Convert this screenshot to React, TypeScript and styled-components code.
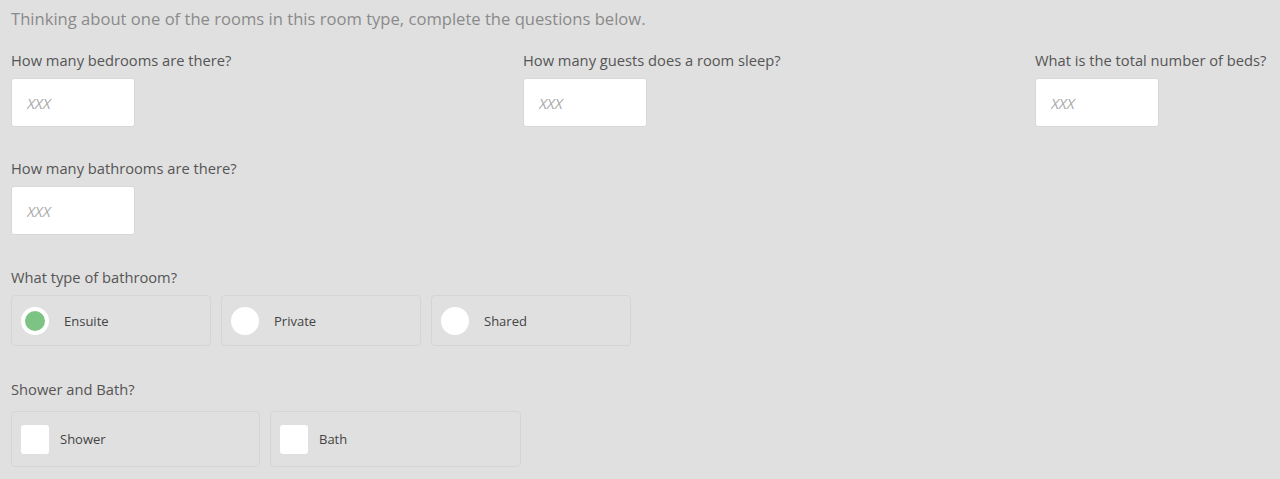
import React from 'react';
import styled, { createGlobalStyle } from 'styled-components';

const GlobalStyle = createGlobalStyle`
  body {
    margin: 0;
    background: #e0e0e0;
    font-family: 'Open Sans', 'Noto Sans', sans-serif;
  }
`;

const Page = styled.div`
  padding: 8px 11px 12px;
  width: 1280px;
  box-sizing: border-box;
`;

const Intro = styled.p`
  margin: 0 0 20px;
  font-size: 16.6px;
  line-height: 22px;
  color: #8a8a8a;
`;

const FieldGrid = styled.div`
  display: grid;
  grid-template-columns: 500px 500px auto;
  column-gap: 12px;
  row-gap: 31px;
  margin-bottom: 32px;
`;

const Field = styled.div`
  display: flex;
  flex-direction: column;
  align-items: flex-start;
`;

const Label = styled.label<{ $gap?: number }>`
  display: block;
  font-size: 14.7px;
  line-height: 20px;
  color: #555;
  white-space: nowrap;
  margin-bottom: ${(p) => p.$gap ?? 8}px;
`;

const NumberInput = styled.input`
  width: 124px;
  height: 49px;
  box-sizing: border-box;
  border: 1px solid #d8d8d8;
  border-radius: 3px;
  background: #fff;
  padding: 0 15px;
  font-family: inherit;
  font-size: 15px;
  font-style: italic;
  color: #555;
  outline: none;

  &::placeholder {
    color: #aaa;
  }
`;

const Section = styled.div<{ $bottom?: number }>`
  margin-bottom: ${(p) => p.$bottom ?? 0}px;
`;

const OptionRow = styled.div`
  display: flex;
  gap: 10px;
`;

const OptionCard = styled.label<{ $w: number; $h: number; $gap: number }>`
  display: flex;
  align-items: center;
  gap: ${(p) => p.$gap}px;
  width: ${(p) => p.$w}px;
  height: ${(p) => p.$h}px;
  box-sizing: border-box;
  padding-left: 9px;
  border: 1px solid #d5d5d5;
  border-radius: 4px;
  font-size: 13px;
  color: #444;
  cursor: pointer;
`;

const RadioDot = styled.span<{ $checked?: boolean }>`
  width: 28px;
  height: 28px;
  box-sizing: border-box;
  border-radius: 50%;
  border: 4px solid #fff;
  background: ${(p) => (p.$checked ? '#7dc383' : '#fff')};
  flex-shrink: 0;
`;

const CheckBox = styled.span`
  width: 28px;
  height: 29px;
  border-radius: 3px;
  background: #fff;
  flex-shrink: 0;
`;

const fields = [
  'How many bedrooms are there?',
  'How many guests does a room sleep?',
  'What is the total number of beds?',
  'How many bathrooms are there?',
];

const bathroomTypes = ['Ensuite', 'Private', 'Shared'];

export default function App() {
  return (
    <>
      <GlobalStyle />
      <Page>
        <Intro>
          Thinking about one of the rooms in this room type, complete the questions below.
        </Intro>

        <FieldGrid>
          {fields.map((f) => (
            <Field key={f}>
              <Label>{f}</Label>
              <NumberInput placeholder="XXX" />
            </Field>
          ))}
        </FieldGrid>

        <Section $bottom={33}>
          <Label $gap={8}>What type of bathroom?</Label>
          <OptionRow>
            {bathroomTypes.map((t, i) => (
              <OptionCard key={t} $w={200} $h={51} $gap={15}>
                <RadioDot $checked={i === 0} />
                {t}
              </OptionCard>
            ))}
          </OptionRow>
        </Section>

        <Section>
          <Label $gap={12}>Shower and Bath?</Label>
          <OptionRow>
            <OptionCard $w={249} $h={56} $gap={11}>
              <CheckBox />
              Shower
            </OptionCard>
            <OptionCard $w={251} $h={56} $gap={11}>
              <CheckBox />
              Bath
            </OptionCard>
          </OptionRow>
        </Section>
      </Page>
    </>
  );
}
